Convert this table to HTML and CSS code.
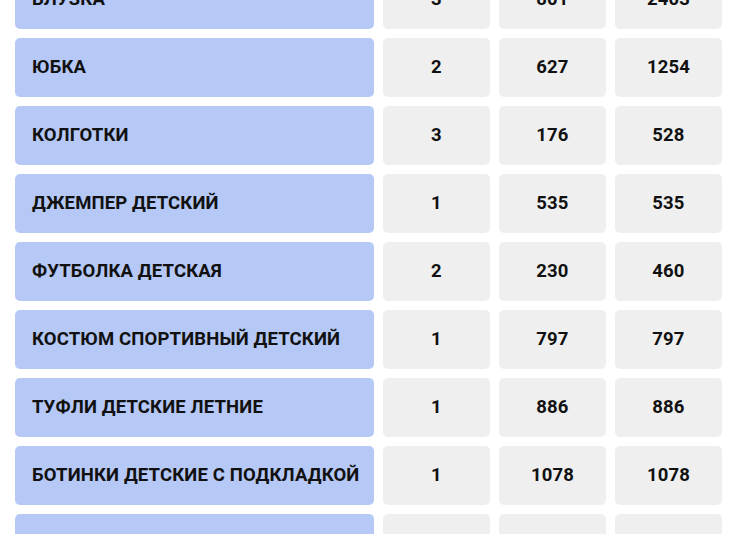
FILE: index.html
```html
<!DOCTYPE html>
<html lang="ru">
<head>
<meta charset="utf-8">
<link rel="stylesheet" href="styles.css">
</head>
<body>
<div class="table">
  <div class="row"><div class="cell name">Блузка</div><div class="cell num">3</div><div class="cell num">801</div><div class="cell num">2403</div></div>
  <div class="row"><div class="cell name">Юбка</div><div class="cell num">2</div><div class="cell num">627</div><div class="cell num">1254</div></div>
  <div class="row"><div class="cell name">Колготки</div><div class="cell num">3</div><div class="cell num">176</div><div class="cell num">528</div></div>
  <div class="row"><div class="cell name">Джемпер детский</div><div class="cell num">1</div><div class="cell num">535</div><div class="cell num">535</div></div>
  <div class="row"><div class="cell name">Футболка детская</div><div class="cell num">2</div><div class="cell num">230</div><div class="cell num">460</div></div>
  <div class="row"><div class="cell name">Костюм спортивный детский</div><div class="cell num">1</div><div class="cell num">797</div><div class="cell num">797</div></div>
  <div class="row"><div class="cell name">Туфли детские летние</div><div class="cell num">1</div><div class="cell num">886</div><div class="cell num">886</div></div>
  <div class="row"><div class="cell name">Ботинки детские с подкладкой</div><div class="cell num">1</div><div class="cell num">1078</div><div class="cell num">1078</div></div>
  <div class="row"><div class="cell name">Кроссовки детские</div><div class="cell num">1</div><div class="cell num">950</div><div class="cell num">950</div></div>
</div>
</body>
</html>
```
FILE: styles.css
```css
html, body {
  margin: 0;
  padding: 0;
  background: #ffffff;
  overflow: hidden;
}
body {
  font-family: Roboto, "Liberation Sans", sans-serif;
  color: #111111;
}
.table {
  display: flex;
  flex-direction: column;
  gap: 9px;
  margin: -30px 15px 0 15px;
}
.row {
  display: grid;
  grid-template-columns: 359px 107px 107px 107px;
  column-gap: 9px;
  height: 59px;
}
.cell {
  display: flex;
  align-items: center;
  border-radius: 5px;
  font-weight: 700;
  font-size: 18.5px;
  line-height: 1;
  letter-spacing: 0.15px;
  text-transform: uppercase;
  padding-bottom: 1px;
  box-sizing: border-box;
}
.name {
  background: #b5c8f6;
  padding-left: 17px;
}
.num {
  background: #efefef;
  justify-content: center;
}
```
